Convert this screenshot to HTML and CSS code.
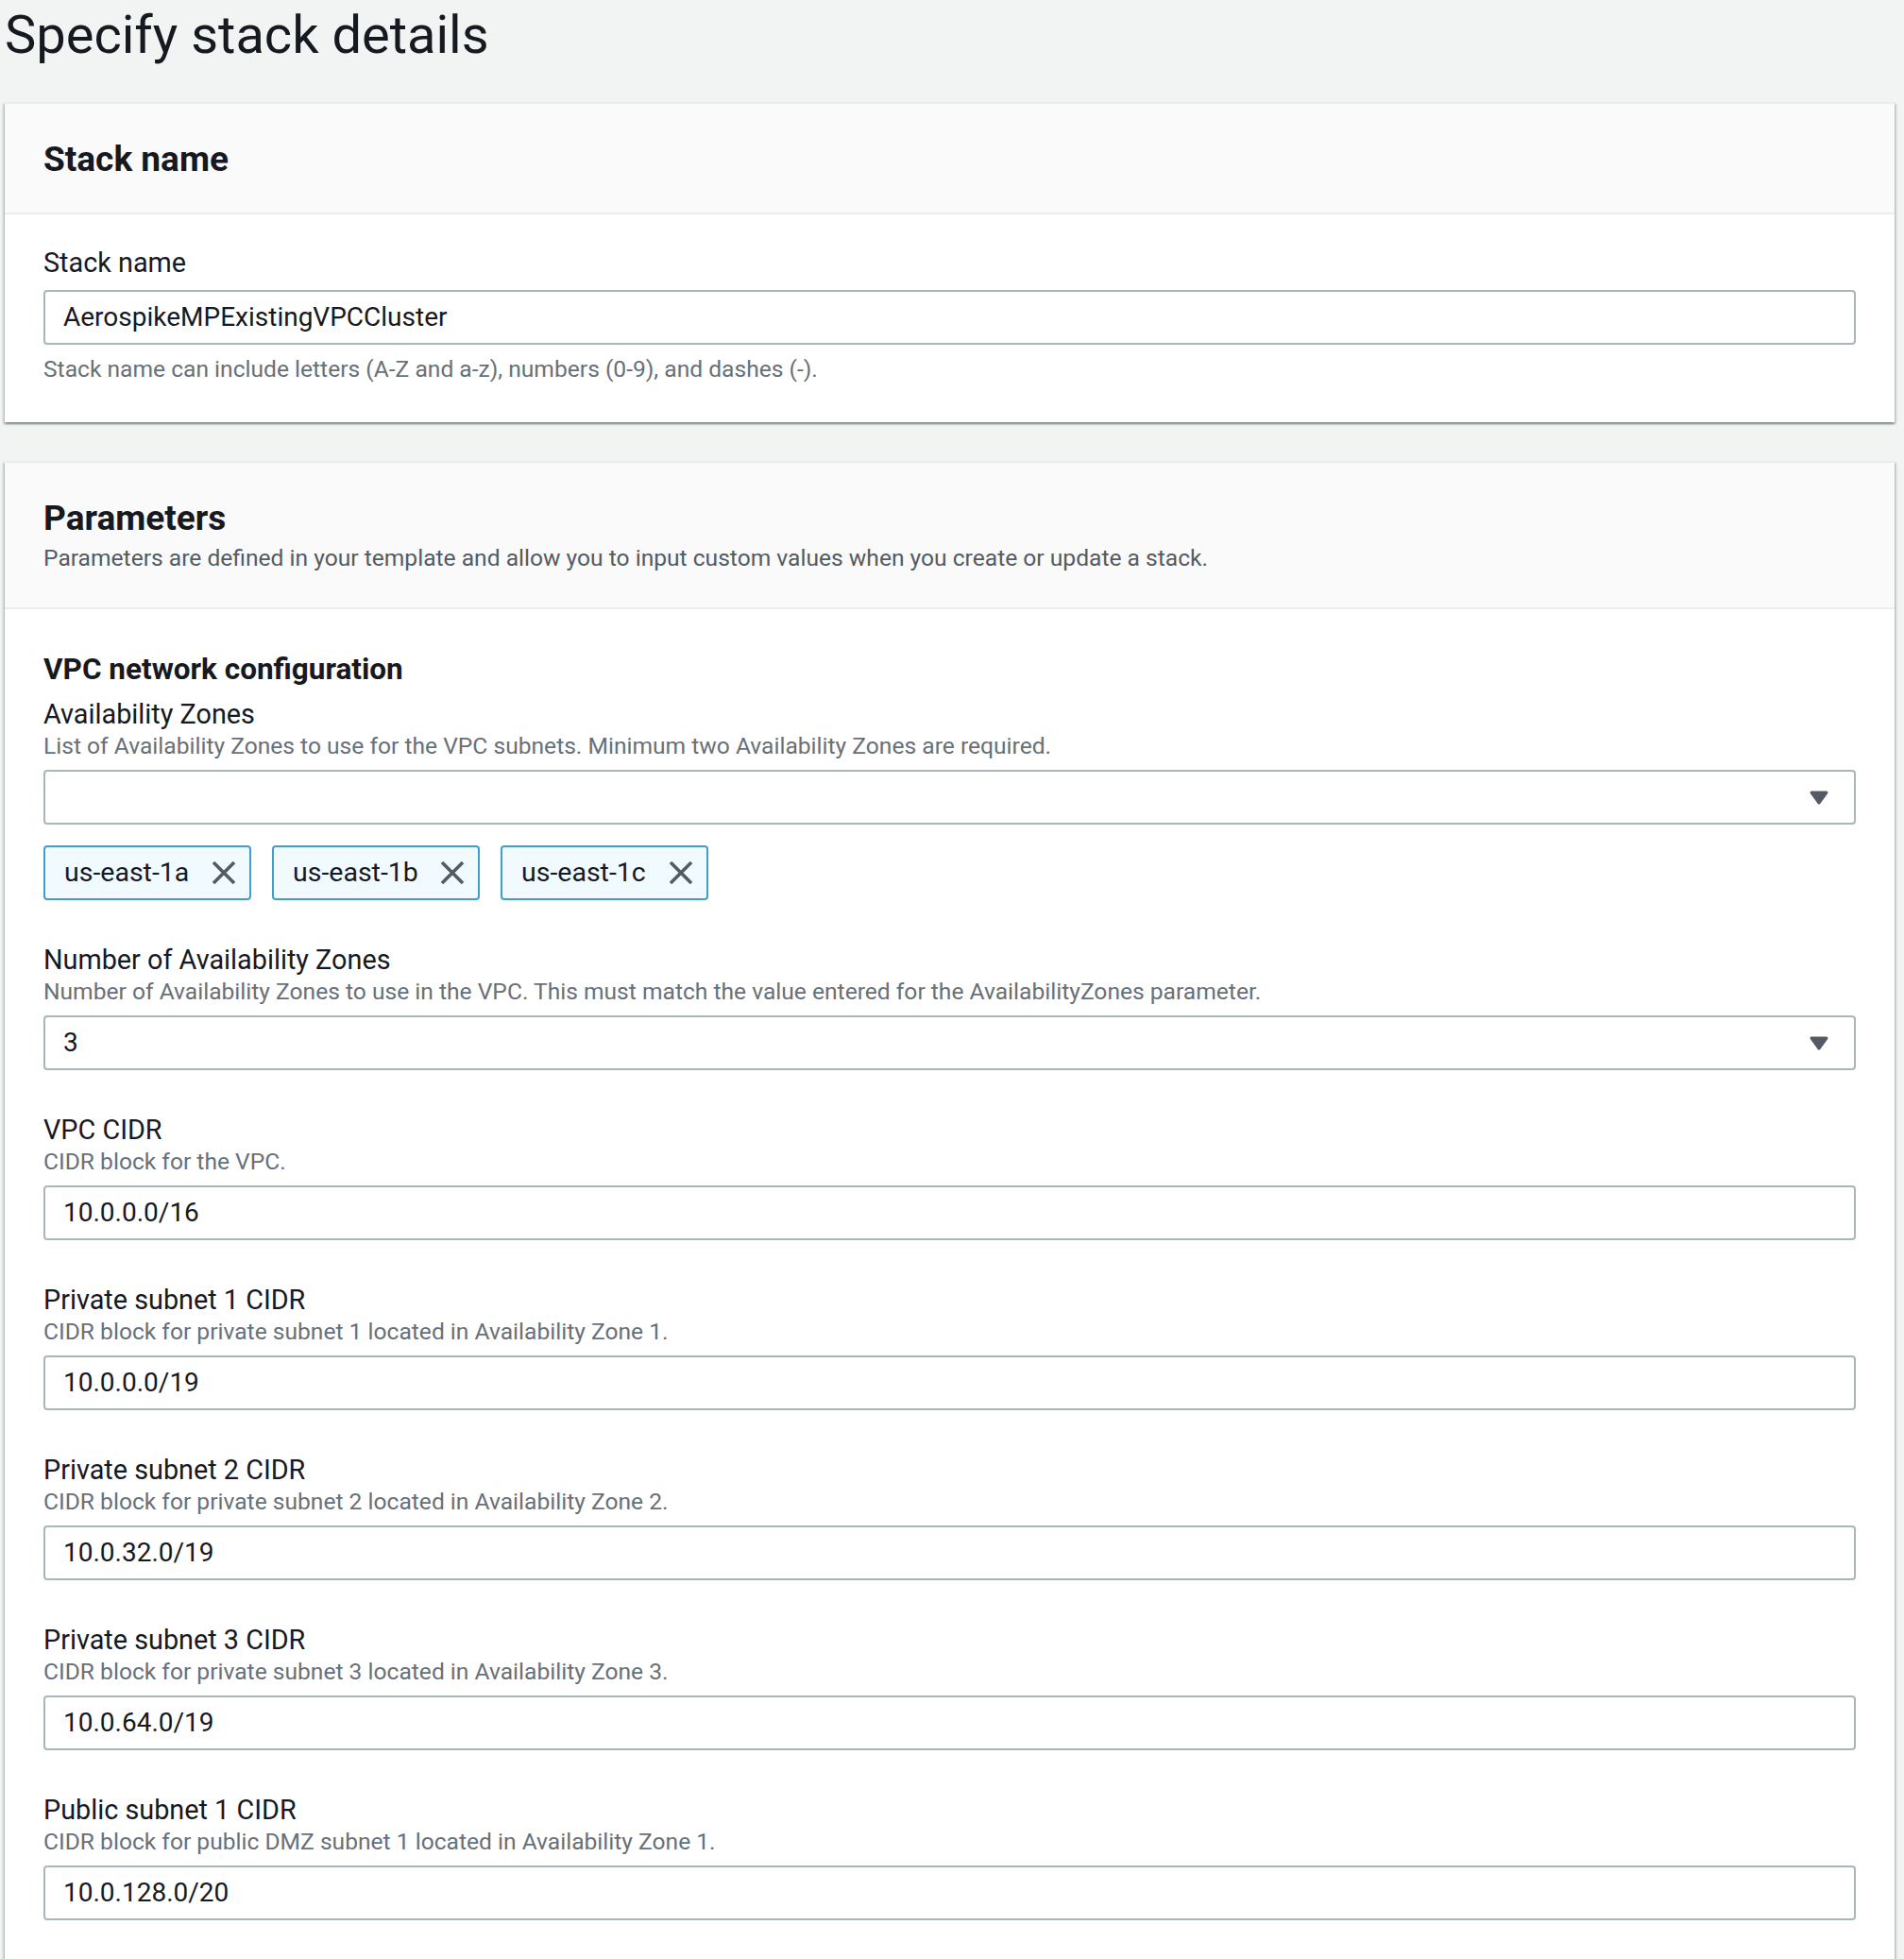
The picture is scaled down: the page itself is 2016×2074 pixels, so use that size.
FILE: index.html
```html
<!DOCTYPE html>
<html lang="en">
<head>
<meta charset="utf-8">
<title>Specify stack details</title>
<link rel="stylesheet" href="styles.css">
</head>
<body>
<div class="page">
  <h1 class="page-title">Specify stack details</h1>

  <section class="card">
    <header class="card-header">
      <h2 class="card-title">Stack name</h2>
    </header>
    <div class="card-body">
      <div class="field">
        <label class="field-label">Stack name</label>
        <div class="input"><span class="input-value">AerospikeMPExistingVPCCluster</span></div>
        <p class="field-hint">Stack name can include letters (A-Z and a-z), numbers (0-9), and dashes (-).</p>
      </div>
    </div>
  </section>

  <section class="card">
    <header class="card-header">
      <h2 class="card-title">Parameters</h2>
      <p class="card-desc">Parameters are defined in your template and allow you to input custom values when you create or update a stack.</p>
    </header>
    <div class="card-body card-body-params">
      <h3 class="group-title">VPC network configuration</h3>

      <div class="field field-first">
        <label class="field-label">Availability Zones</label>
        <p class="field-desc">List of Availability Zones to use for the VPC subnets. Minimum two Availability Zones are required.</p>
        <div class="input select">
          <span class="input-value"></span>
          <svg class="caret" width="22" height="17" viewBox="0 0 22 17"><path d="M3 3 H19 L11 14 Z" fill="#545b64" stroke="#545b64" stroke-width="3" stroke-linejoin="round"/></svg>
        </div>
        <div class="tokens">
          <div class="token"><span class="token-text">us-east-1a</span><svg class="token-x" width="28" height="28" viewBox="0 0 28 28"><path d="M3 3 L25 25 M25 3 L3 25" stroke="#545b64" stroke-width="3.6" fill="none"/></svg></div>
          <div class="token"><span class="token-text">us-east-1b</span><svg class="token-x" width="28" height="28" viewBox="0 0 28 28"><path d="M3 3 L25 25 M25 3 L3 25" stroke="#545b64" stroke-width="3.6" fill="none"/></svg></div>
          <div class="token"><span class="token-text">us-east-1c</span><svg class="token-x" width="28" height="28" viewBox="0 0 28 28"><path d="M3 3 L25 25 M25 3 L3 25" stroke="#545b64" stroke-width="3.6" fill="none"/></svg></div>
        </div>
      </div>

      <div class="field">
        <label class="field-label">Number of Availability Zones</label>
        <p class="field-desc">Number of Availability Zones to use in the VPC. This must match the value entered for the AvailabilityZones parameter.</p>
        <div class="input select">
          <span class="input-value">3</span>
          <svg class="caret" width="22" height="17" viewBox="0 0 22 17"><path d="M3 3 H19 L11 14 Z" fill="#545b64" stroke="#545b64" stroke-width="3" stroke-linejoin="round"/></svg>
        </div>
      </div>

      <div class="field">
        <label class="field-label">VPC CIDR</label>
        <p class="field-desc">CIDR block for the VPC.</p>
        <div class="input"><span class="input-value">10.0.0.0/16</span></div>
      </div>

      <div class="field">
        <label class="field-label">Private subnet 1 CIDR</label>
        <p class="field-desc">CIDR block for private subnet 1 located in Availability Zone 1.</p>
        <div class="input"><span class="input-value">10.0.0.0/19</span></div>
      </div>

      <div class="field">
        <label class="field-label">Private subnet 2 CIDR</label>
        <p class="field-desc">CIDR block for private subnet 2 located in Availability Zone 2.</p>
        <div class="input"><span class="input-value">10.0.32.0/19</span></div>
      </div>

      <div class="field">
        <label class="field-label">Private subnet 3 CIDR</label>
        <p class="field-desc">CIDR block for private subnet 3 located in Availability Zone 3.</p>
        <div class="input"><span class="input-value">10.0.64.0/19</span></div>
      </div>

      <div class="field">
        <label class="field-label">Public subnet 1 CIDR</label>
        <p class="field-desc">CIDR block for public DMZ subnet 1 located in Availability Zone 1.</p>
        <div class="input"><span class="input-value">10.0.128.0/20</span></div>
      </div>
    </div>
  </section>
</div>
</body>
</html>
```
FILE: styles.css
```css
html, body {
  margin: 0;
  padding: 0;
  background: #f2f3f3;
}
body {
  font-family: Roboto, "Noto Sans", "Liberation Sans", sans-serif;
  color: #16191f;
}
.page {
  padding: 5px 10px 0 5px;
  display: flex;
  flex-direction: column;
}
.page-title {
  margin: 0 0 39px 0;
  font-size: 56px;
  line-height: 64px;
  font-weight: 400;
  color: #16191f;
}
.card {
  background: #fff;
  border-top: 2px solid #eaeded;
  box-shadow: 0 2px 2px rgba(0, 28, 36, 0.3), 2px 2px 2px rgba(0, 28, 36, 0.15), -2px 2px 2px rgba(0, 28, 36, 0.15);
  margin-bottom: 41px;
}
.card-header {
  background: #fafafa;
  border-bottom: 2px solid #eaeded;
  padding: 37px 41px 34px;
}
.card-title {
  margin: 0;
  font-size: 37px;
  line-height: 44px;
  font-weight: 700;
}
.card-desc {
  margin: 5px 0 3px 0;
  font-size: 24.6px;
  line-height: 30px;
  color: #545b64;
}
.card-body {
  padding: 33px 41px 41px;
  display: flex;
  flex-direction: column;
}
.card-body-params {
  padding-top: 34px;
  padding-bottom: 80px;
}
.group-title {
  margin: 11px 0 0 0;
  font-size: 31.5px;
  line-height: 38px;
  font-weight: 700;
}
.field {
  display: flex;
  flex-direction: column;
  margin-top: 45px;
}
.card-body > .field:first-child {
  margin-top: 0;
}
.field-first {
  margin-top: 10px;
}
.field-label {
  font-size: 28.8px;
  line-height: 37px;
}
.field-desc {
  margin: 0;
  font-size: 24.6px;
  line-height: 30px;
  color: #687078;
}
.field-hint {
  margin: 11px 0 0 0;
  font-size: 24.6px;
  line-height: 30px;
  color: #687078;
}
.input {
  margin-top: 10px;
  height: 58px;
  box-sizing: border-box;
  border: 2px solid #aab7b8;
  border-radius: 4px;
  background: #fff;
  display: flex;
  align-items: center;
  padding: 0 26px 0 19px;
}
.input-value {
  flex: 1;
  font-size: 28px;
  line-height: 34px;
  color: #16191f;
}
.caret {
  display: block;
}
.tokens {
  display: flex;
  gap: 22px;
  margin-top: 22px;
}
.token {
  height: 58px;
  box-sizing: border-box;
  width: 220px;
  border: 2px solid #3f9fcb;
  border-radius: 4px;
  background: #f1faff;
  display: flex;
  align-items: center;
  justify-content: space-between;
  padding: 0 13px 0 20px;
}
.token-text {
  font-size: 28.5px;
  line-height: 34px;
  color: #16191f;
}
.token-x {
  display: block;
}
```
